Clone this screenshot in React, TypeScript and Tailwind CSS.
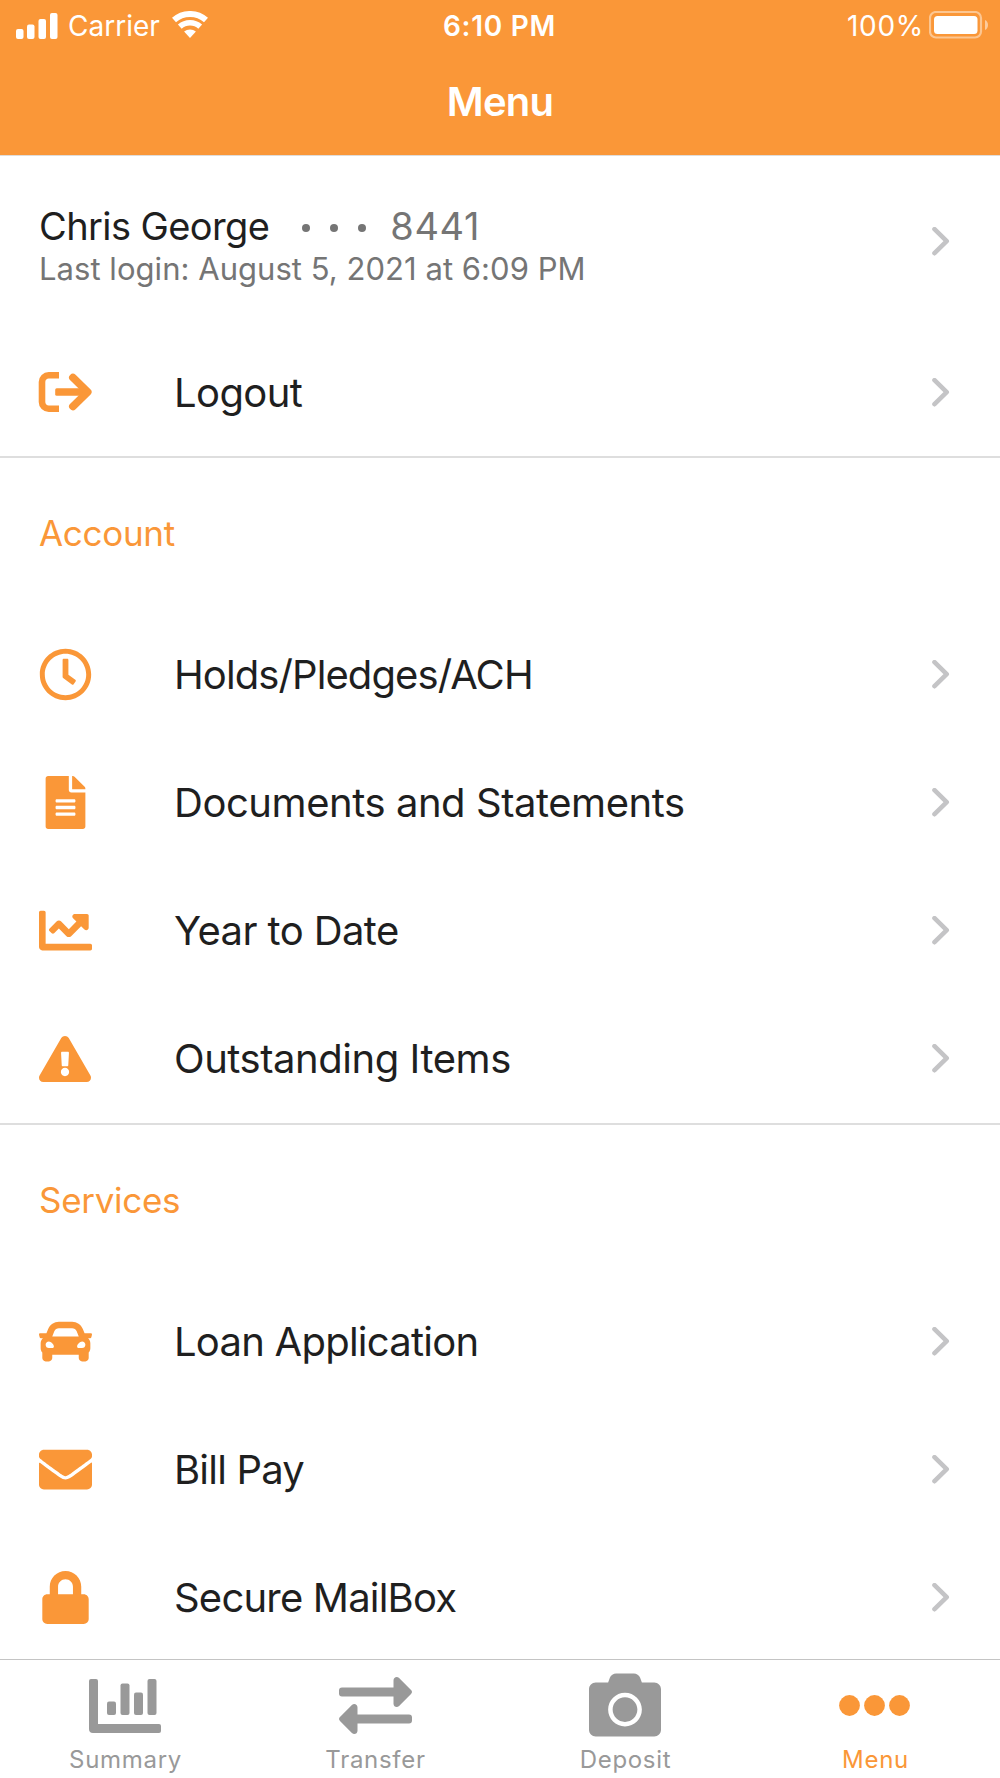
import type { ReactNode } from "react";
import {
  FaCamera,
  FaCar,
  FaChartLine,
  FaEnvelope,
  FaExclamationTriangle,
  FaFileAlt,
  FaLock,
  FaRegClock
} from "react-icons/fa";

type Item = { label: string; icon: ReactNode; tracking: string };

const accountItems: Item[] = [
  { label: "Holds/Pledges/ACH", icon: <FaRegClock className="size-[53px]" />, tracking: "tracking-[-0.9px]" },
  { label: "Documents and Statements", icon: <FaFileAlt className="size-[53px]" />, tracking: "tracking-[-0.45px]" },
  { label: "Year to Date", icon: <FaChartLine className="size-[53px]" />, tracking: "tracking-[-0.6px]" },
  { label: "Outstanding Items", icon: <FaExclamationTriangle className="mt-px size-[52px]" />, tracking: "tracking-[-0.45px]" }
];

const serviceItems: Item[] = [
  { label: "Loan Application", icon: <FaCar className="size-[53px]" />, tracking: "tracking-[-0.75px]" },
  { label: "Bill Pay", icon: <FaEnvelope className="size-[53px]" />, tracking: "tracking-[-0.8px]" },
  { label: "Secure MailBox", icon: <FaLock className="size-[53px]" />, tracking: "tracking-[-0.8px]" }
];

function LogoutIcon() {
  return (
    <svg viewBox="-0.7 0 54 40" className="h-10 w-[54px]" fill="none" stroke="currentColor">
      <path d="M20.300 3.300H10A6.700 6.700 0 0 0 3.300 10v20a6.700 6.700 0 0 0 6.700 6.700h10.300" strokeWidth="6.600" />
      <path d="M18 16.200h28v7.600H18a1.500 1.500 0 0 1-1.500-1.500v-4.600a1.500 1.500 0 0 1 1.500-1.500z" fill="currentColor" stroke="none" />
      <path d="M34.200 5.600 49 20 34.200 34.400" strokeWidth="7.700" strokeLinecap="round" strokeLinejoin="round" />
    </svg>
  );
}

function Chevron() {
  return (
    <svg viewBox="0 0 18 29" className="h-[29px] w-[18px] shrink-0" fill="none" stroke="#c4c4c6">
      <path d="M2.500 2.200 14.700 14.200 2.500 26.200" strokeWidth="4.600" strokeLinecap="round" strokeLinejoin="round" />
    </svg>
  );
}

function Row({ label, icon, tracking }: Item) {
  return (
    <li className="flex h-32 shrink-0 items-center pl-[38px] pr-[50px]">
      <span className="flex w-[54px] justify-center text-[#fa9738]">{icon}</span>
      <span className={`ml-[82px] mt-0.5 flex-1 text-[40px] leading-none ${tracking}`}>{label}</span>
      <Chevron />
    </li>
  );
}

function Section({ title, items }: { title: string; items: Item[] }) {
  return (
    <section className="shrink-0">
      <h2 className="flex h-[152px] items-center pb-0.5 pl-[39px] text-[35px] tracking-[-0.3px] text-[#fa9738]">{title}</h2>
      <ul>
        {items.map((item) => (
          <Row key={item.label} {...item} />
        ))}
      </ul>
    </section>
  );
}

function StatusBar() {
  return (
    <div className="grid h-[51px] grid-cols-3 items-center pl-3 pr-[11px] text-[28px]">
      <div className="flex items-center pl-1">
        <svg viewBox="0 0 42 26" className="h-[26px] w-[42px]" fill="currentColor">
          <rect x="0" y="16" width="7.500" height="10" rx="2" />
          <rect x="11" y="11.500" width="7.500" height="14.500" rx="2" />
          <rect x="22.500" y="6" width="7.500" height="20" rx="2" />
          <rect x="34" y="0" width="7.500" height="26" rx="2" />
        </svg>
        <span className="ml-2.5">Carrier</span>
        <svg viewBox="0 0 36 27" className="mb-0.5 ml-3 h-[27px] w-9" fill="none" stroke="currentColor">
          <path d="M2 9.100a24 24 0 0 1 32 0" strokeWidth="6" />
          <path d="M7.800 15.600a15.300 15.300 0 0 1 20.400 0" strokeWidth="5.600" />
          <path d="M18 27l-5.900-6.500a9.500 9.500 0 0 1 11.800 0z" fill="currentColor" stroke="none" />
        </svg>
      </div>
      <span className="pr-0.5 text-center font-semibold tracking-[0.7px]">6:10 PM</span>
      <div className="flex items-center justify-end">
        <span className="tracking-[0.7px]">100%</span>
        <svg viewBox="0 0 60 28" className="mb-0.5 ml-[5px] h-7 w-[60px]">
          <rect x="1" y="1" width="51" height="25.500" rx="6" fill="none" stroke="#fff" strokeOpacity="0.45" strokeWidth="2.200" />
          <rect x="5" y="5" width="43.500" height="18" rx="3.500" fill="#fff" />
          <path d="M56 9c4 1.500 4 8.500 0 10z" fill="#fff" fillOpacity="0.5" />
        </svg>
      </div>
    </div>
  );
}

function SummaryIcon() {
  return (
    <svg viewBox="0 0 72 54" className="mb-0.5 h-[54px] w-[72px]" fill="currentColor">
      <path d="M2 0h5a2 2 0 0 1 2 2v43h61a2 2 0 0 1 2 2v5a2 2 0 0 1-2 2H4a4 4 0 0 1-4-4V2a2 2 0 0 1 2-2z" />
      <rect x="18" y="22.500" width="9" height="13.500" rx="2" />
      <rect x="31.500" y="4.500" width="9" height="31.500" rx="2" />
      <rect x="45" y="13.500" width="9" height="22.500" rx="2" />
      <rect x="58.500" y="0" width="9" height="36" rx="2" />
    </svg>
  );
}

function TransferIcon() {
  return (
    <svg viewBox="0 0 73 58" className="mb-px h-[58px] w-[73px]" fill="currentColor">
      <path d="M3 10.500h51.500V3.400c0-3 3.400-4.400 5.600-2.300l11.700 11.700a3 3 0 0 1 0 4.400L60.100 29c-2.200 2.200-5.600.7-5.600-2.300v-7.200H3a3 3 0 0 1-3-3v-3a3 3 0 0 1 3-3z" />
      <path d="M70 37.500H18.500v-7.100c0-3-3.400-4.400-5.600-2.300L1.200 39.800a3 3 0 0 0 0 4.400L12.900 56c2.200 2.200 5.600.7 5.600-2.300v-7.200H70a3 3 0 0 0 3-3v-3a3 3 0 0 0-3-3z" />
    </svg>
  );
}

function MoreIcon() {
  return (
    <svg viewBox="0 0 72 21" className="mb-0.5 h-[21px] w-[72px]" fill="currentColor">
      <circle cx="10.500" cy="10.500" r="10.400" />
      <circle cx="35.500" cy="10.500" r="10.400" />
      <circle cx="60.500" cy="10.500" r="10.400" />
    </svg>
  );
}

const tabs = [
  { label: "Summary", icon: <SummaryIcon />, color: "text-[#999999]" },
  { label: "Transfer", icon: <TransferIcon />, color: "text-[#999999]" },
  { label: "Deposit", icon: <FaCamera className="mb-[3px] size-[72px]" />, color: "text-[#999999]" },
  { label: "Menu", icon: <MoreIcon />, color: "text-[#fa9738]" }
];

export default function App() {
  return (
    <div className="flex h-[1778px] w-[1000px] flex-col overflow-hidden bg-white font-['Inter','Liberation_Sans',sans-serif] text-[#1f1f1f]">
      <header className="h-[156px] shrink-0 border-b border-[#e0dcd8] bg-[#fa9738] text-white">
        <StatusBar />
        <h1 className="mt-[25px] text-center text-[40px] font-semibold leading-[52px] tracking-[-0.8px]">Menu</h1>
      </header>

      <main className="flex min-h-0 flex-1 flex-col overflow-hidden">
        <div className="flex h-[172px] shrink-0 items-center justify-between pl-[39px] pr-[50px]">
          <div className="pt-2">
            <div className="flex items-center text-[38px] leading-[46px]">
              <span className="tracking-[-0.6px]">Chris George</span>
              <span className="ml-[33px] mt-1 flex gap-5 text-[#757575]">
                <i className="size-2 rounded-full bg-current" />
                <i className="size-2 rounded-full bg-current" />
                <i className="size-2 rounded-full bg-current" />
              </span>
              <span className="ml-6 tracking-[0.6px] text-[#757575]">8441</span>
            </div>
            <p className="text-[31px] leading-[40px] tracking-[0.04px] text-[#757575]">Last login: August 5, 2021 at 6:09 PM</p>
          </div>
          <div className="mb-0.5">
            <Chevron />
          </div>
        </div>
        <ul className="shrink-0 border-b-2 border-[#dedede]">
          <Row label="Logout" icon={<LogoutIcon />} tracking="tracking-[-0.6px]" />
        </ul>
        <Section title="Account" items={accountItems} />
        <div className="mt-px h-0.5 shrink-0 bg-[#dedede]" />
        <Section title="Services" items={serviceItems} />
      </main>

      <nav className="grid h-[119px] shrink-0 grid-cols-4 border-t border-[#c4c4c4] bg-white">
        {tabs.map(({ label, icon, color }) => (
          <div key={label} className={`flex flex-col items-center ${color}`}>
            <div className="mt-2 flex h-[77px] items-center">{icon}</div>
            <span className="pl-px text-[24px] leading-[30px] tracking-[0.7px]">{label}</span>
          </div>
        ))}
      </nav>
    </div>
  );
}
